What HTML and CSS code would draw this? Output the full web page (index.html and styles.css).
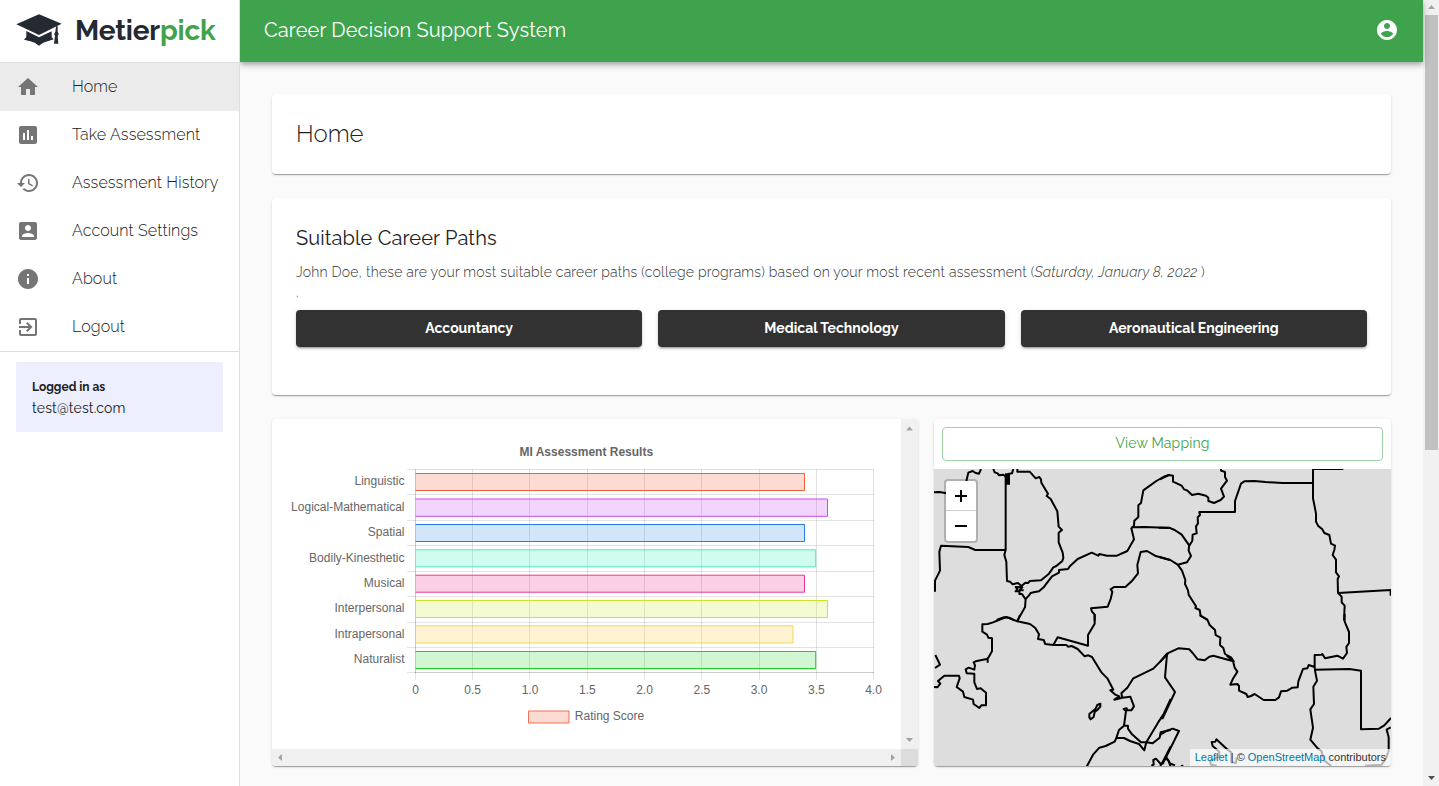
FILE: index.html
```html
<!DOCTYPE html>
<html lang="en">
<head>
<meta charset="utf-8">
<title>Metierpick</title>
<link rel="stylesheet" href="styles.css">
</head>
<body>
<div class="app">
  <aside class="sidebar">
    <div class="brand">
      <svg class="cap" width="46" height="32" viewBox="0 0 138 96" fill="#252932">
        <path d="M1 31 69 1l68 28-68 34zM31 51l38 19 38-18v18l6 6-18 6q-14 2-26 13-12-11-26-13l-19-5 7-8zM120 38l5-2v18q6 7 0 11l2 24h-13l3-24q-5-5 1-11z"/>
      </svg>
      <span class="wordmark">Metier<span class="pick">pick</span></span>
    </div>
    <nav class="nav">
      <a class="item active"><svg viewBox="0 0 24 24"><path d="M10 20v-6h4v6h5v-8h3L12 3 2 12h3v8z"/></svg><span>Home</span></a>
      <a class="item"><svg viewBox="0 0 24 24"><path d="M19 3H5c-1.1 0-2 .9-2 2v14c0 1.1.9 2 2 2h14c1.1 0 2-.9 2-2V5c0-1.100-.9-2-2-2zM9 17H7v-7h2v7zm4 0h-2V7h2v10zm4 0h-2v-4h2v4z"/></svg><span>Take Assessment</span></a>
      <a class="item"><svg viewBox="0 0 24 24"><path d="M13 3c-4.970 0-9 4.030-9 9H1l3.890 3.890.070.140L9 12H6c0-3.870 3.130-7 7-7s7 3.130 7 7-3.130 7-7 7c-1.930 0-3.680-.79-4.940-2.060l-1.420 1.420C8.270 19.990 10.510 21 13 21c4.970 0 9-4.030 9-9s-4.030-9-9-9zm-1 5v5l4.280 2.540.72-1.210-3.500-2.080V8H12z"/></svg><span>Assessment History</span></a>
      <a class="item"><svg viewBox="0 0 24 24"><path d="M3 5v14c0 1.100.89 2 2 2h14c1.100 0 2-.9 2-2V5c0-1.100-.9-2-2-2H5c-1.110 0-2 .9-2 2zm12 4c0 1.660-1.340 3-3 3s-3-1.340-3-3 1.340-3 3-3 3 1.340 3 3zm-9 8c0-2 4-3.100 6-3.100s6 1.100 6 3.100v1H6v-1z"/></svg><span>Account Settings</span></a>
      <a class="item"><svg viewBox="0 0 24 24"><path d="M12 2C6.480 2 2 6.480 2 12s4.480 10 10 10 10-4.480 10-10S17.520 2 12 2zm1 15h-2v-6h2v6zm0-8h-2V7h2v2z"/></svg><span>About</span></a>
      <a class="item"><svg viewBox="0 0 24 24"><path d="M10.090 15.590L11.500 17l5-5-5-5-1.410 1.410L12.670 11H3v2h9.670l-2.580 2.590zM19 3H5c-1.110 0-2 .9-2 2v4h2V5h14v14H5v-4H3v4c0 1.100.89 2 2 2h14c1.100 0 2-.9 2-2V5c0-1.100-.9-2-2-2z"/></svg><span>Logout</span></a>
    </nav>
    <div class="user">
      <div class="user-label">Logged in as</div>
      <div class="user-mail">test@test.com</div>
    </div>
  </aside>
  <div class="page">
    <header class="topbar">
      <span class="system">Career Decision Support System</span>
      <svg width="24" height="24" viewBox="0 0 24 24" fill="#fff"><path fill-rule="evenodd" d="M12 2C6.480 2 2 6.480 2 12s4.480 10 10 10 10-4.480 10-10S17.520 2 12 2zm0 3c1.660 0 3 1.340 3 3s-1.340 3-3 3-3-1.340-3-3 1.340-3 3-3zm0 14.200c-2.500 0-4.710-1.280-6-3.220.03-1.990 4-3.080 6-3.080 1.990 0 5.970 1.090 6 3.080-1.290 1.940-3.500 3.220-6 3.220z"/></svg>
    </header>
    <main class="content">
      <section class="card title-card"><h1>Home</h1></section>
      <section class="card careers">
        <h2>Suitable Career Paths</h2>
        <p class="intro">John Doe, these are your most suitable career paths (college programs) based on your most recent assessment (<em>Saturday, January 8, 2022 </em>)</p>
        <p class="dot">.</p>
        <div class="buttons">
          <button>Accountancy</button><button>Medical Technology</button><button>Aeronautical Engineering</button>
        </div>
      </section>
      <div class="row">
        <section class="card chart-card">
          <svg class="chart" width="629" height="330" viewBox="272 419 629 330">
            <path class="grid" d="M407 469.500H874M407 494.500H874M407 520.500H874M407 545.500H874M407 571.500H874M407 596.500H874M407 622.500H874M407 647.500H874M407 672.500H874M472.500 469V680M529.500 469V680M587.500 469V680M644.500 469V680M701.500 469V680M759.500 469V680M816.500 469V680M873.500 469V680M415.500 469V680"/>
            <path class="grid" d="M415.500 469V673M415 672.500H874"/>
            <g class="bars">
              <path fill="#f04923" stroke="#f0603f" d="M415.500 473.500H804.500V490.500H415.500"/>
              <path fill="#bd23f0" stroke="#c94bf0" d="M415.500 499H827.500V516.300H415.500"/>
              <path fill="#237cea" stroke="#237cea" d="M415.500 524.500H804.500V541.500H415.500"/>
              <path fill="#13eab1" stroke="#4ceac2" d="M415.500 549.800H815.700V566.800H415.500"/>
              <path fill="#ea1384" stroke="#ea3596" d="M415.500 575.200H804.500V592.200H415.500"/>
              <path fill="#cae61c" stroke="#cfe329" d="M415.500 600.500H827.500V617.500H415.500"/>
              <path fill="#fac823" stroke="#f8d34e" d="M415.500 625.800H793V643H415.500"/>
              <path fill="#18d01e" stroke="#1fcf20" d="M415.500 651.500H815.700V668.500H415.500"/>
              <path fill="#f04923" stroke="#f04923" stroke-opacity=".75" d="M528.500 711H569V723H528.500z"/>
            </g>
            <g class="labels" text-anchor="end">
              <text x="404.500" y="485">Linguistic</text><text x="404.500" y="511">Logical-Mathematical</text><text x="404.500" y="536">Spatial</text><text x="404.500" y="562">Bodily-Kinesthetic</text><text x="404.500" y="587">Musical</text><text x="404.500" y="612">Interpersonal</text><text x="404.500" y="638">Intrapersonal</text><text x="404.500" y="663">Naturalist</text>
            </g>
            <g class="labels" text-anchor="middle">
              <text x="415.500" y="694">0</text><text x="472.700" y="694">0.5</text><text x="530" y="694">1.0</text><text x="587.300" y="694">1.5</text><text x="644.500" y="694">2.0</text><text x="701.800" y="694">2.5</text><text x="759" y="694">3.0</text><text x="816.300" y="694">3.5</text><text x="873.500" y="694">4.0</text>
              <text x="609.500" y="720">Rating Score</text>
              <text class="bold" x="586.300" y="456">MI Assessment Results</text>
            </g>
          </svg>
          <div class="vbar"><svg width="17" height="330"><path d="M5 11.500h7l-3.500-4zM5 319h7l-3.500 4z"/></svg></div>
          <div class="hbar"><svg width="629" height="17"><path d="M10 5v7l-4-3.500zM619 5v7l4-3.500z"/></svg></div>
          <div class="corner"></div>
        </section>
        <section class="card map-card">
          <button class="mapping">View Mapping</button>
          <div class="map">
            <svg class="borders" width="457" height="297" viewBox="0 0 457 297">
              <g transform="translate(-4 -4) scale(.33333)">
                <path d="M10 82 28 81 50 85M109 48 115 23 128 18 137 24 147 26 153 12M190 12 194 22 203 25 207 31 219 29 227 34 237 26 246 25 250 12"/>
                <path d="M262 12V20H299L317 40 328 36 333 43 334 53 354 86 350 93 362 102 382 139 386 185 396 195 386 203V232L398 263 400 278 397 288 379 303 370 307 357 326 333 346 300 348 294 354 286 353 270 367 257 366 262 372 257 379 269 379 268 387 276 387 286 402"/>
                <path d="M227 30V254L223 270 229 290 231 348 240 350 248 358 264 354 270 359 277 367 269 375 281 376"/>
                <path d="M226 255H136L115 246 33 242 28 260 30 317 15 347V380"/>
                <path d="M720 29 700 36 679 48 640 76 633 114 625 121V156L613 167 612 182 604 190 612 223 592 258 561 272H531L508 267 505 272 485 263 443 282 421 302 414 312 387 315 387 323 366 334 347 359 341 367 327 379 311 382 302 384 297 391 287 402 285 427 262 467"/>
                <path d="M605 187 644 186 722 189M720 285 675 272 651 258 632 261 622 300 624 325 605 349 586 366H552L542 373 547 380 542 402 533 425 483 430 486 440 494 449V467M200 465 220 457 238 458 253 466"/>
                <path class="blot" d="M225 25h15v34h-15z"/>
              </g>
              <g transform="translate(226 -4) scale(.33333)">
                <path d="M0 43 26 30 39 32V50L65 62 72 73 81 76 96 90 115 86 138 92 145 98V108L162 114 182 105 192 95 183 71 201 47 195 36V21L183 17V12M458 12H550M459 12V100L463 120 468 146V170L474 182 487 193 493 204 508 210 513 236 525 242 523 255 518 270 528 284V322L537 334 533 342 534 384 545 395V412L554 422 552 467M534 384 692 375V392"/>
                <path d="M459 54H367L317 51 283 48 253 49 243 56 225 108V141H118L120 150 113 157 114 175 108 184 110 205 98 209 97 227 87 244 86 257 93 273 81 292 53 299M-4 188H27L44 195 65 209 88 242M-2 276 31 285 53 299 66 317 76 345 75 357 84 376 86 389 108 424 106 429 119 435 122 453 143 465"/>
              </g>
              <g transform="translate(-4 146) scale(.33333)">
                <path d="M270 0 262 19 229 6 189 22 173 27 157 28V50L171 59 175 68 186 70V109L175 128 170 132 137 139 131 142 135 151 133 164 116 158 107 163 110 175 133 176V202L141 222 152 220 168 233V271L154 271 148 279 131 267 129 254 103 246 99 230 80 216 89 190 87 182H43L24 198 31 206 22 217 12 216M173 128V143M16 120 30 149 15 159M262 19 300 27 316 39 327 58 324 72 341 75 346 87 370 90 383 67 474 92V60L494 26V-2M370 90 409 90 414 95 425 93 443 102 464 124 475 121 486 126 515 173 532 190 550 224 541 226 556 239 568 244 553 254 577 248 574 235 592 218 610 190 670 161 714 116M577 248 601 245 612 274 604 286 593 286 590 280 581 282 588 288 582 332 567 345 559 369 582 369 600 378 627 387 643 406 649 381 633 382 606 358 594 341 594 332H582M559 369 554 380 527 393 508 398 490 418 470 455M478 297 497 281 502 270 511 266V275L502 285 494 291 491 306 482 313 478 307zM722 252 700 299 684 323 649 382 668 385 689 368 692 352 722 345M722 394 694 449 678 431 670 435 671 449 664 452M704 428 715 436 722 455"/>
              </g>
              <g transform="translate(226 146) scale(.33333)">
                <path d="M119 0 142 14 149 30 165 45 167 60 181 68 180 90 190 99 195 117 214 128 221 139 206 135 160 122 148 125 134 136 113 133 98 114 88 103 55 100 21 116 0 141M21 118 15 187 45 231 8 310 0 310M200 122 219 137 224 158 232 170 218 193 211 209 232 207 237 213 237 227 259 237 263 246 273 243 284 237 311 255H346L357 247 363 229 382 227 397 218 413 217 415 199 429 162 442 160 446 150 464 156V120L484 119 487 117 495 130 532 122 549 131 561 114 559 96 567 84V51L554 20V-3M464 156 465 167 471 197 460 215 462 267 451 283 459 338 451 374 473 400 484 408 493 437 514 453M465 164 568 162 603 167V343L657 341 673 331 693 309M692 337 680 344 686 367V408M0 360 21 347 38 341 57 348 8 447M0 452 20 428 30 445 45 451M63 453 70 452M203 404 169 373 166 380 155 381 158 393 178 410 177 425 150 438 153 449 170 452M203 404 214 412V442L228 444 230 428M686 408 678 430 665 449 615 452"/>
              </g>
            </svg>
            <div class="zoom"><span><svg width="14" height="14"><path d="M1 7h12M7 1v12"/></svg></span><span><svg width="14" height="14"><path d="M1 7h12"/></svg></span></div>
            <div class="credit"><a>Leaflet</a> | © <a>OpenStreetMap</a> contributors</div>
          </div>
        </section>
      </div>
    </main>
  </div>
  <div class="scrollbar"><svg width="16" height="15"><path d="M5 9h7L8.500 5z"/></svg><div class="thumb"></div><svg class="down" width="16" height="15"><path d="M5 5h7L8.500 9z"/></svg></div>
</div>
</body>
</html>
```
FILE: styles.css
```css
* { box-sizing: border-box; }
body { margin: 0; height: 786px; overflow: hidden; background: #fafafa; font-family: Raleway, Lato, sans-serif; color: #212121; }
h1, h2, p { margin: 0; }
svg { display: block; flex: none; }
button { font-family: inherit; margin: 0; }
.app { display: flex; height: 786px; }
.sidebar { position: relative; z-index: 1; width: 240px; flex: none; background: #fff; border-right: 1px solid #dedede; }
.brand { height: 63px; border-bottom: 1px solid #dedede; display: flex; align-items: flex-start; padding: 14px 0 0 16px; }
.wordmark { margin-left: 13px; margin-top: -2px; font-size: 28px; line-height: 37px; font-weight: 700; color: #252932; white-space: nowrap; letter-spacing: -0.2px; }
.pick { color: #3fa34d; }
.nav { border-bottom: 1px solid #dedede; }
.item { display: flex; height: 48px; align-items: center; padding-left: 16px; font-size: 16px; font-weight: 300; letter-spacing: 0.12px; white-space: nowrap; }
.item svg { width: 24px; height: 24px; margin-right: 32px; fill: #757575; }
.item span { line-height: 24px; }
.active { background: #ebebeb; }
.user { margin: 10px 16px 0; height: 70px; background: #edefff; padding: 14px 16px; }
.user-label { font-size: 12px; font-weight: 700; line-height: 22px; }
.user-mail { font-size: 14px; line-height: 20px; letter-spacing: 0.17px; }
.page { flex: 1; min-width: 0; }
.topbar { position: relative; height: 62px; background: #3fa34d; color: #fff; display: flex; justify-content: space-between; align-items: center; padding: 0 24px; box-shadow: 0 2px 4px -1px #0003, 0 4px 5px #00000024, 0 1px 10px #0000001f; }
.topbar svg { margin-top: -2px; }
.system { font-size: 20px; line-height: 28px; margin-top: -3px; letter-spacing: 0.12px; white-space: nowrap; }
.content { padding: 32px; display: flex; flex-direction: column; gap: 24px; }
.card { background: #fff; border-radius: 4px; box-shadow: 0 2px 1px -1px #0003, 0 1px 1px #00000024, 0 1px 3px #0000001f; }
.title-card { height: 80px; padding: 24px; }
h1 { font-size: 24px; line-height: 32px; font-weight: 300; }
.careers { height: 197px; padding: 24px; }
h2 { font-size: 20px; line-height: 32px; font-weight: 400; letter-spacing: 0.12px; }
.intro, .dot { color: #333; font-size: 14px; font-weight: 300; letter-spacing: 0.2px; white-space: pre; }
.intro { line-height: 20px; margin-top: 8px; }
.dot { line-height: 20px; height: 20px; }
.buttons { display: grid; grid-template-columns: 1fr 1fr 1fr; gap: 16px; margin-top: 8px; }
.buttons button { height: 37px; border: 0; border-radius: 4px; padding: 0 0 2px; background: #323232; color: #fff; font-weight: 700; font-size: 14px; box-shadow: 0 3px 1px -2px #0003, 0 2px 2px #00000024, 0 1px 5px #0000001f; }
.row { display: grid; grid-template-columns: 646px 457px; gap: 16px; height: 347px; }
.chart-card { display: grid; grid-template: 330px 17px / 629px 17px; overflow: hidden; }
.vbar, .hbar { background: #f0f0f0; fill: #a3a3a3; }
.corner { background: #dcdcdc; }
.grid { fill: none; stroke: #0000001c; }
.bars path { fill-opacity: .2; }
.labels { font: 12px "Liberation Sans", Arial, sans-serif; fill: #666; }
.bold { font-weight: 700; }
.map-card { padding-top: 8px; overflow: hidden; }
.mapping { display: block; width: 441px; height: 34px; margin: 0 8px 8px; background: #fff; border: 1px solid #9fd1a6; border-radius: 4px; color: #3fa34d; font-size: 14px; letter-spacing: 0.17px; padding: 0 0 2px; }
.map { position: relative; height: 297px; background: #ddd; overflow: hidden; }
.borders path { fill: none; stroke: #000; stroke-width: 6; stroke-linejoin: round; }
.borders .blot { fill: #000; stroke: none; }
.zoom { position: absolute; left: 10px; top: 10px; width: 34px; height: 64px; border: 2px solid #0003; border-radius: 4px; background: #fff; background-clip: padding-box; }
.zoom span { display: flex; height: 30px; align-items: center; justify-content: center; }
.zoom span:first-child { height: 29px; padding-top: 1px; }
.zoom span + span { border-top: 1px solid #ccc; }
.zoom path { stroke: #000; stroke-width: 2; }
.credit { position: absolute; right: 0; bottom: 0; height: 17px; padding: 0 5px; background: #ffffffb3; font: 11px/17px "Liberation Sans", Arial, sans-serif; color: #333; white-space: nowrap; }
.credit a { color: #0078a8; }
.scrollbar { width: 16px; background: #f1f1f1; display: flex; flex-direction: column; fill: #a3a3a3; }
.thumb { width: 13px; height: 435px; margin-left: 2px; background: #c1c1c1; }
.down { margin-top: auto; fill: #505050; }
```
